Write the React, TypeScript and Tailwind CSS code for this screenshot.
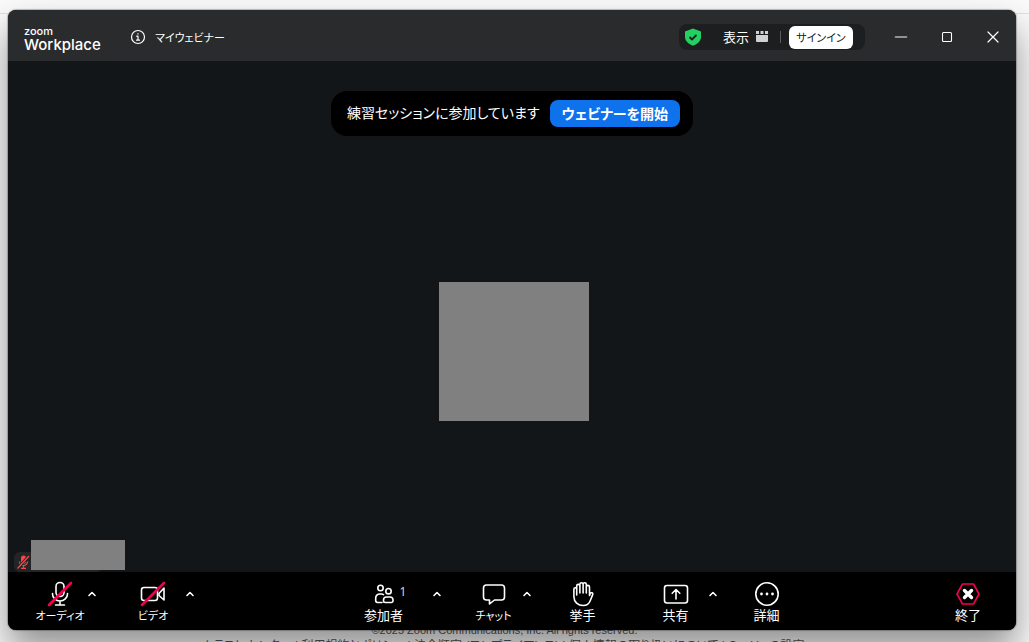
import type { ReactNode } from "react";

function Icon({ children, size = 28 }: { children: ReactNode; size?: number }) {
  return (
    <svg
      width={size}
      height={size}
      viewBox={`0 0 ${size} ${size}`}
      fill="none"
      stroke="currentColor"
      strokeWidth="1.6"
      strokeLinecap="round"
      strokeLinejoin="round"
      aria-hidden="true"
    >
      {children}
    </svg>
  );
}

const icons = {
  audio: (
    <Icon>
      <rect x="10" y="2.5" width="8" height="14" rx="4" />
      <path d="M6.5 13.5v.5a7.5 7 0 0 0 15 0v-.5M14 21v4M9.5 25h9" />
      <path d="M3 25 25 3" stroke="#f5004f" strokeWidth="2.6" />
    </Icon>
  ),
  video: (
    <Icon>
      <rect x="2.5" y="7.5" width="16" height="13" rx="2.5" />
      <path d="m20 13.5 5-5.5v12l-5-4.5z" />
      <path d="M3 25 25 3" stroke="#f5004f" strokeWidth="2.6" />
    </Icon>
  ),
  people: (
    <Icon>
      <circle cx="10.5" cy="8" r="2.7" />
      <circle cx="18.5" cy="11.2" r="2.7" />
      <path d="M12 22.5H7.5A1.9 1.9 0 0 1 5.7 20.6V18a4 4 0 0 1 4-4h1.8a3.5 3.5 0 0 1 2 .6" />
      <path d="M16.5 17h3.5a3 3 0 0 1 3 3v.8a1.7 1.7 0 0 1-1.7 1.7h-6.1a1.7 1.7 0 0 1-1.7-1.7V20a3 3 0 0 1 3-3Z" />
    </Icon>
  ),
  chat: (
    <Icon>
      <path d="M6.5 5h15a3 3 0 0 1 3 3v9a3 3 0 0 1-3 3h-7l-5 4v-4h-3a3 3 0 0 1-3-3V8a3 3 0 0 1 3-3Z" />
    </Icon>
  ),
  hand: (
    <Icon>
      <path d="M7.7 15V6a1.6 1.6 0 0 1 3.2 0v7M10.9 13V4.3a1.6 1.6 0 0 1 3.2 0V13M14.1 13V4.3a1.6 1.6 0 0 1 3.2 0V13M17.3 13V7a1.6 1.6 0 0 1 3.2 0v8.5l.8-2a1.3 1.3 0 0 1 2.4 1.1l-2.500 6.100a7.500 7.500 0 0 1-7 4.800c-5.200 0-9.300-3.500-9.300-8.700V9.200a1.400 1.400 0 0 1 2.800 0" />
    </Icon>
  ),
  share: (
    <Icon>
      <rect x="2.5" y="5.5" width="23" height="17.5" rx="2.5" />
      <path d="M14 19v-9M10.2 13.3 14 9.5l3.8 3.8" />
    </Icon>
  ),
  more: (
    <Icon>
      <circle cx="14" cy="14" r="11.2" />
      <g fill="currentColor" stroke="none">
        <circle cx="8.5" cy="14" r="1.4" />
        <circle cx="14" cy="14" r="1.4" />
        <circle cx="19.5" cy="14" r="1.4" />
      </g>
    </Icon>
  ),
  end: (
    <Icon>
      <path d="M8.5 4h11L25 14l-5.500 10h-11L3 14Z" stroke="#f5004f" />
      <path d="m10.5 10.5 7 7m0-7-7 7" strokeWidth="3.4" />
    </Icon>
  ),
};

type ToolButtonProps = {
  icon: ReactNode;
  label: string;
  className?: string;
  badge?: string;
};

function ToolButton({ icon, label, className = "text-[13px]", badge }: ToolButtonProps) {
  return (
    <button type="button" className={`relative flex w-12 shrink-0 flex-col items-center pt-2 ${className}`}>
      {icon}
      {badge && <span className="absolute top-3 left-10 font-['Noto_Sans'] text-xs leading-4 text-gray-300">{badge}</span>}
      <span className="leading-[14px] whitespace-nowrap">{label}</span>
    </button>
  );
}

function Caret({ label, className = "" }: { label: string; className?: string }) {
  return (
    <button type="button" aria-label={label} className={`flex w-4 shrink-0 justify-center pt-[14px] ${className}`}>
      <Icon size={16}>
        <path d="m5 9.5 3-3 3 3" />
      </Icon>
    </button>
  );
}

function TitleBar() {
  return (
    <header className="flex h-[51px] shrink-0 items-center bg-[#2a2b2d] pt-[3px] pl-4">
      <div className="w-[106px] pt-px font-[Inter] font-medium">
        <div className="text-[11px] leading-[14px]">zoom</div>
        <div className="text-[15px] leading-[14px]">Workplace</div>
      </div>
      <Icon size={16}>
        <g strokeWidth="1.2">
          <circle cx="8" cy="8" r="6.5" />
          <path d="M6.7 7.2H8v4M6.5 11.2h3M8 4.7v.3" />
        </g>
      </Icon>
      <h1 className="ml-[9px] text-[11px] leading-4">マイウェビナー</h1>

      <div className="mr-[13px] ml-auto flex h-[26px] items-center rounded-lg bg-[#1c1e20] pr-3 pl-1">
        <svg width="20" height="20" viewBox="0 0 20 20" aria-hidden="true">
          <path d="M10 1.5 18 4.5v5.5c0 4-3.500 7-8 8.700C5.500 17 2 14 2 10V4.500Z" fill="#23d160" />
          <path d="m6.500 10 2.500 2.500 4.500-4.500" fill="none" stroke="#1c1e20" strokeWidth="1.8" />
        </svg>
        <button type="button" className="ml-5 flex items-center gap-[7px] text-[13px] leading-4">
          表示
          <svg width="12" height="12" viewBox="0 0 12 12" fill="#d1d1d1" aria-hidden="true">
            <path d="M0 0h3v3H0zM4.5 0h3v3h-3zM9 0h3v3H9zM0 4h12v6a1 1 0 0 1-1 1H1a1 1 0 0 1-1-1z" />
          </svg>
        </button>
        <span className="mr-2 ml-3 h-3 w-px bg-[#5b5d60]" />
        <button type="button" className="h-[23px] w-16 rounded-md bg-white text-[11px] leading-4 text-[#222]">
          サインイン
        </button>
      </div>

      <button type="button" aria-label="最小化" className="flex w-[46px] justify-center">
        <Icon size={16}>
          <path d="M2.5 8h11" stroke="#b5b5b5" />
        </Icon>
      </button>
      <button type="button" aria-label="最大化" className="flex w-[46px] justify-center">
        <Icon size={16}>
          <rect x="3.5" y="3.5" width="9" height="9" rx="1" strokeWidth="1.1" />
        </Icon>
      </button>
      <button type="button" aria-label="閉じる" className="flex w-[46px] justify-center">
        <Icon size={16}>
          <path d="m3 3 10 10M13 3 3 13" strokeWidth="1.2" />
        </Icon>
      </button>
    </header>
  );
}

export default function App() {
  return (
    <div className="relative flex h-screen flex-col overflow-hidden bg-[#fafafa] px-2 pt-[10px] pr-[13px] pb-3 font-['Noto_Sans_CJK_JP',sans-serif] text-white [font-feature-settings:'palt']">
      <div className="absolute inset-x-0 top-[13px] h-px bg-[#e0e0e0]" />
      <footer className="absolute inset-x-0 -bottom-3 pr-5 text-center font-['Liberation_Sans','Noto_Sans_CJK_JP',sans-serif] leading-4 text-[#555]">
        <p className="text-[11px] leading-4">©2025 Zoom Communications, Inc. All rights reserved.</p>
        <p className="text-xs leading-4">トラスト センター | 利用規約とポリシー | 法令順守 (コンプライアンス) | 個人情報の取り扱いについて | Cookie の設定</p>
      </footer>

      <div className="relative flex min-h-0 flex-1 flex-col overflow-hidden rounded-lg bg-[#131619] shadow-[0_20px_36px_rgba(0,0,0,0.42),0_0_1px_1px_rgba(0,0,0,0.25)]">
        <TitleBar />

        <main className="relative flex min-h-0 flex-1 flex-col items-center pt-[30px]">
          <div className="flex h-[45px] shrink-0 items-center gap-[10px] rounded-2xl bg-black pr-[13px] pl-4">
            <p className="pb-1 text-sm leading-6">練習セッションに参加しています</p>
            <button type="button" className="h-[27px] rounded-lg bg-[#0e72ed] px-3 pb-0.5 text-sm leading-6 font-bold">
              ウェビナーを開始
            </button>
          </div>

          <div className="flex flex-1 items-center pb-1.5 pl-1">
            <div className="h-[139px] w-[150px] bg-[#808080]" />
          </div>

          <div className="absolute bottom-0 left-1.5 flex h-5 w-[88px] items-center rounded-md bg-[#222426]">
            <svg width="18" height="18" viewBox="0 0 18 18" aria-hidden="true">
              <rect x="7" y="2.5" width="5" height="8.5" rx="2.5" fill="#f04a4a" />
              <path d="M5.5 8.5a4 4 0 0 0 8 0M9.5 12.5V15M7 15.3h5" fill="none" stroke="#f04a4a" strokeWidth="1.3" />
              <path d="M3.5 15.5 15 3" stroke="#222426" strokeWidth="3" />
              <path d="M3.5 15.5 15 3" stroke="#f04a4a" strokeWidth="1.3" />
            </svg>
          </div>
          <div className="absolute bottom-0.5 left-[23px] h-[30px] w-[94px] bg-[#808080]" />
        </main>

        <nav aria-label="ミーティング コントロール" className="flex h-[58px] shrink-0 items-start bg-black">
          <div className="flex pl-7">
            <ToolButton icon={icons.audio} label="オーディオ" className="text-[11px]" />
            <Caret label="オーディオ設定" />
            <ToolButton icon={icons.video} label="ビデオ" className="ml-[29px] text-[11px]" />
            <Caret label="ビデオ設定" className="ml-[5px]" />
          </div>
          <div className="flex flex-1 justify-center pl-2">
            <ToolButton icon={icons.people} label="参加者" badge="1" />
            <Caret label="参加者メニュー" className="ml-[21px]" />
            <ToolButton icon={icons.chat} label="チャット" className="ml-[25px] text-[11px]" />
            <Caret label="チャット設定" className="ml-px" />
            <ToolButton icon={icons.hand} label="挙手" className="ml-6 text-[13px]" />
            <ToolButton icon={icons.share} label="共有" className="ml-[45px] text-[13px]" />
            <Caret label="共有設定" className="ml-[5px]" />
            <ToolButton icon={icons.more} label="詳細" className="ml-[22px] text-[13px]" />
          </div>
          <div className="flex pr-6">
            <ToolButton icon={icons.end} label="終了" />
          </div>
        </nav>
      </div>
    </div>
  );
}
